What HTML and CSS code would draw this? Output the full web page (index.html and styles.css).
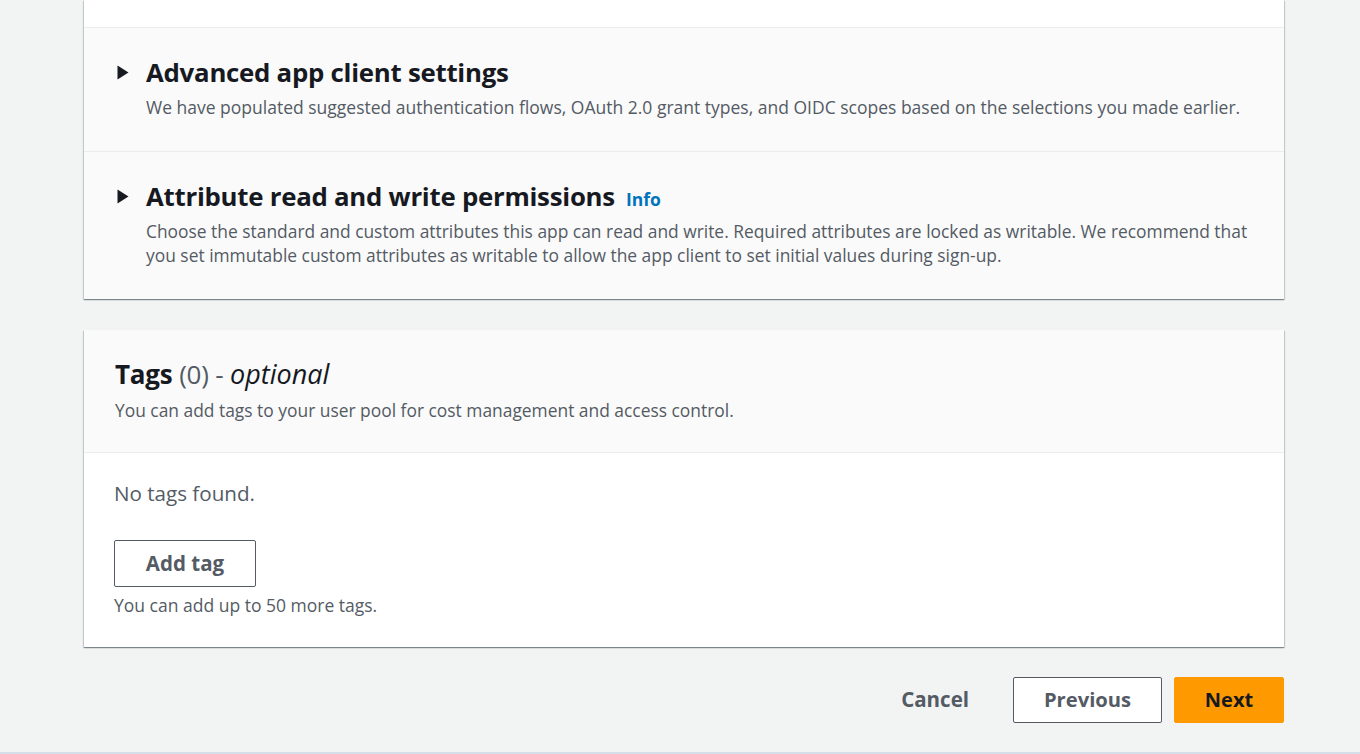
FILE: index.html
```html
<!DOCTYPE html>
<html lang="en">
<head>
<meta charset="utf-8">
<title>App client</title>
<link rel="stylesheet" href="styles.css">
</head>
<body>
<div class="page">
  <div class="card">
    <div class="card-top"></div>
    <div class="exp exp-first">
      <div class="exp-head">
        <svg class="caret" width="12" height="15" viewBox="0 0 12 15"><path d="M0.5 0.5 L11.5 7.5 L0.5 14.5 Z" fill="#16191f"/></svg>
        <h2 class="exp-title">Advanced app client settings</h2>
      </div>
      <p class="exp-desc">We have populated suggested authentication flows, OAuth 2.0 grant types, and OIDC scopes based on the selections you made earlier.</p>
    </div>
    <div class="exp exp-second">
      <div class="exp-head">
        <svg class="caret" width="12" height="15" viewBox="0 0 12 15"><path d="M0.5 0.5 L11.5 7.5 L0.5 14.5 Z" fill="#16191f"/></svg>
        <h2 class="exp-title">Attribute read and write permissions</h2>
        <a class="info" href="#">Info</a>
      </div>
      <p class="exp-desc">Choose the standard and custom attributes this app can read and write. Required attributes are locked as writable. We recommend that you set immutable custom attributes as writable to allow the app client to set initial values during sign-up.</p>
    </div>
  </div>

  <div class="card tags">
    <div class="tags-head">
      <h2 class="tags-title">Tags <span class="count">(0)</span><span class="sep"> - </span><em>optional</em></h2>
      <p class="tags-desc">You can add tags to your user pool for cost management and access control.</p>
    </div>
    <div class="tags-body">
      <p class="empty">No tags found.</p>
      <button class="btn btn-normal add">Add tag</button>
      <p class="hint">You can add up to 50 more tags.</p>
    </div>
  </div>

  <div class="actions">
    <button class="btn btn-link">Cancel</button>
    <button class="btn btn-normal prev">Previous</button>
    <button class="btn btn-primary next">Next</button>
  </div>
</div>
<div class="bottom-line"></div>
</body>
</html>
```

FILE: styles.css
```css
* { box-sizing: border-box; }
html, body { margin: 0; padding: 0; }
body {
  background: #f2f3f3;
  font-family: "Open Sans", "Noto Sans", sans-serif;
  color: #16191f;
  height: 754px;
  overflow: hidden;
  display: flex;
  flex-direction: column;
}
.page {
  padding: 0 76px 0 84px;
  flex: 1;
}
.card {
  background: #fff;
  box-shadow: 0 1px 1px 0 rgba(0, 28, 36, 0.3), 1px 1px 1px 0 rgba(0, 28, 36, 0.15), -1px 1px 1px 0 rgba(0, 28, 36, 0.15);
}
.card-top {
  height: 28px;
  border-bottom: 1px solid #eaeded;
}
.exp {
  background: #fafafa;
  padding: 0 32px 0 33px;
}
.exp-first {
  height: 124px;
  border-bottom: 1px solid #eaeded;
  padding-top: 28px;
}
.exp-second {
  height: 147px;
  padding-top: 28px;
}
.exp-head {
  display: flex;
  align-items: center;
  height: 32px;
}
.caret { margin-right: 17px; flex: none; }
.exp-title {
  margin: 0;
  font-size: 25.8px;
  font-weight: 700;
  letter-spacing: -0.25px;
  line-height: 32px;
}
.info {
  margin-left: 11px;
  margin-top: 5px;
  color: #0073bb;
  font-weight: 700;
  font-size: 17.5px;
  text-decoration: none;
}
.exp-desc {
  margin: 7px 0 0 29px;
  font-size: 17.4px;
  line-height: 24px;
  color: #545b64;
}
.exp-first .exp-desc { font-size: 17.5px; }
.tags {
  margin-top: 31px;
}
.tags-head {
  background: #fafafa;
  height: 123px;
  border-bottom: 1px solid #eaeded;
  padding: 28px 31px 0;
}
.tags-title {
  margin: 0;
  font-size: 26px;
  line-height: 32px;
  font-weight: 700;
  letter-spacing: -0.2px;
}
.tags-title .count,
.tags-title .sep { font-weight: 400; color: #545b64; }
.tags-title em { font-weight: 400; font-size: 27px; letter-spacing: 0; }
.tags-desc {
  margin: 8px 0 0;
  font-size: 17.4px;
  line-height: 24px;
  color: #545b64;
}
.tags-body {
  padding: 26px 30px 30px;
}
.empty {
  margin: 0;
  font-size: 20.6px;
  line-height: 28px;
  color: #545b64;
}
.btn {
  font-family: inherit;
  font-weight: 700;
  font-size: 20.5px;
  border-radius: 2px;
  cursor: pointer;
  padding: 0 0 2px;
}
.btn-normal {
  background: #fff;
  border: 1px solid #545b64;
  color: #545b64;
}
.add {
  margin-top: 33px;
  width: 142px;
  height: 47px;
  display: block;
}
.hint {
  margin: 6px 0 0;
  font-size: 17.5px;
  line-height: 24px;
  color: #545b64;
}
.actions {
  margin-top: 30px;
  display: flex;
  justify-content: flex-end;
  align-items: center;
}
.btn-link {
  background: none;
  border: none;
  color: #545b64;
  margin-right: 44px;
  height: 46px;
}
.prev {
  width: 149px;
  height: 46px;
  margin-right: 12px;
  font-size: 20.2px;
}
.btn-primary {
  background: #ff9900;
  border: 1px solid #ff9900;
  color: #16191f;
  width: 110px;
  height: 46px;
  font-size: 20px;
}
.bottom-line {
  height: 2px;
  background: #d5dfea;
  flex: none;
}
```
